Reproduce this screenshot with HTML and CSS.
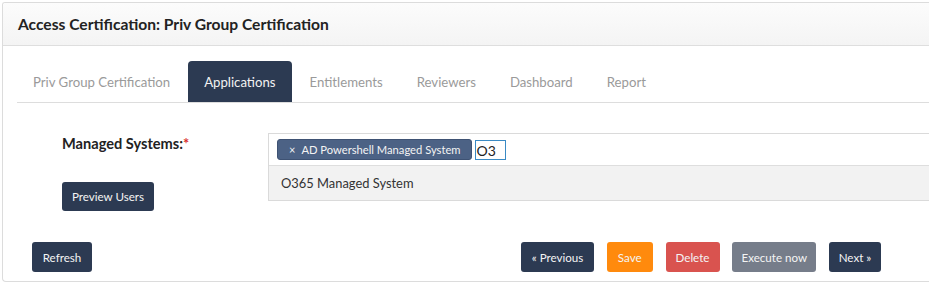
FILE: index.html
```html
<!DOCTYPE html>
<html>
<head>
<meta charset="utf-8">
<link rel="stylesheet" href="styles.css">
</head>
<body>
<div class="panel">
  <div class="panel-heading">Access Certification: Priv Group Certification</div>
  <div class="panel-body">
    <ul class="tabs">
      <li class="tab">Priv Group Certification</li>
      <li class="tab active">Applications</li>
      <li class="tab">Entitlements</li>
      <li class="tab">Reviewers</li>
      <li class="tab">Dashboard</li>
      <li class="tab">Report</li>
    </ul>
    <div class="form-row">
      <div class="label-col">
        <div class="label">Managed Systems:<span class="req">*</span></div>
        <button class="btn btn-dark preview">Preview Users</button>
      </div>
      <div class="select">
        <div class="select-input">
          <span class="tag"><span class="tag-x">×</span>AD Powershell Managed System</span>
          <span class="search">O3</span>
        </div>
        <div class="option">O365 Managed System</div>
      </div>
    </div>
    <div class="actions">
      <button class="btn btn-dark btn-refresh">Refresh</button>
      <div class="right-actions">
        <button class="btn btn-dark btn-prev">« Previous</button>
        <button class="btn btn-orange btn-save">Save</button>
        <button class="btn btn-red btn-delete">Delete</button>
        <button class="btn btn-gray btn-exec">Execute now</button>
        <button class="btn btn-dark btn-next">Next »</button>
      </div>
    </div>
  </div>
</div>
</body>
</html>
```
FILE: styles.css
```css
html, body {
  margin: 0;
  padding: 0;
  background: #fff;
  overflow: hidden;
  width: 929px;
  height: 283px;
}
body {
  font-family: "Source Sans Pro", Lato, "Noto Sans", sans-serif;
  color: #333;
}
.panel {
  margin: 2px 0 0 2px;
  width: 960px;
  height: 280px;
  border: 1px solid #dcdcdc;
  border-right: none;
  border-radius: 3px 0 0 4px;
  box-sizing: border-box;
  overflow: hidden;
}
.panel-heading {
  height: 43px;
  box-sizing: border-box;
  padding: 0 15px;
  display: flex;
  align-items: center;
  font-size: 15.6px;
  font-weight: 700;
  color: #222;
  background: linear-gradient(#fcfcfc, #f4f4f4);
  border-bottom: 1px solid #dedede;
}
.panel-body {
  padding: 15px 0 0 14px;
}
.tabs {
  list-style: none;
  margin: 0;
  padding: 0;
  display: flex;
  border-bottom: 1px solid #dddddd;
  height: 41px;
}
.tab {
  padding: 0 16px;
  margin-right: 2px;
  font-size: 13.2px;
  color: #9a9a9a;
  display: flex;
  align-items: center;
  border-radius: 4px 4px 0 0;
}
.tab.active {
  background: #2c3a52;
  color: #f2f2f2;
}
.form-row {
  display: flex;
  align-items: flex-start;
  margin-top: 30px;
  padding-left: 45px;
}
.label-col {
  width: 206px;
  display: flex;
  flex-direction: column;
  align-items: flex-start;
}
.label {
  font-size: 14.6px;
  font-weight: 700;
  color: #222;
  margin-top: 2px;
}
.req {
  color: #d9302c;
}
.btn {
  font-family: inherit;
  font-size: 11.6px;
  border: none;
  border-radius: 3px;
  height: 30px;
  padding: 0;
  color: #f4f4f4;
  cursor: pointer;
}
.btn-dark { background: #2c3a52; }
.btn-orange { background: #ff8a0d; }
.btn-red { background: #d9534f; }
.btn-gray { background: #767d8a; }
.btn-refresh { width: 60px; }
.btn-prev { width: 73px; }
.btn-save { width: 46px; }
.btn-delete { width: 54px; }
.btn-exec { width: 84px; }
.btn-next { width: 52px; }
.preview {
  margin-top: 30px;
  height: 29px;
  width: 92px;
}
.select {
  width: 680px;
  border: 1px solid #dadada;
  border-right: none;
}
.select-input {
  height: 32px;
  display: flex;
  align-items: center;
  padding-left: 8px;
  border-bottom: 1px solid #dedede;
  box-sizing: border-box;
}
.tag {
  background: #4c6285;
  border: 1px solid #3e5273;
  border-radius: 3px;
  color: #f4f4f4;
  font-size: 11.2px;
  height: 21px;
  box-sizing: border-box;
  display: flex;
  align-items: center;
  padding: 0 10px 0 11px;
}
.tag-x {
  font-size: 11px;
  margin-right: 6px;
}
.search {
  margin-left: 3px;
  border: 1px solid #3a8ac4;
  width: 31px;
  height: 20px;
  box-sizing: border-box;
  font-size: 14px;
  color: #222;
  line-height: 19px;
  padding-left: 1px;
}
.option {
  height: 34px;
  background: #f2f2f2;
  display: flex;
  align-items: center;
  padding-left: 12px;
  font-size: 12.9px;
  color: #333;
}
.actions {
  display: flex;
  margin-top: 31px;
  padding-left: 15px;
  width: 864px;
  box-sizing: border-box;
}
.right-actions {
  margin-left: auto;
  display: flex;
  gap: 12.75px;
}
```
